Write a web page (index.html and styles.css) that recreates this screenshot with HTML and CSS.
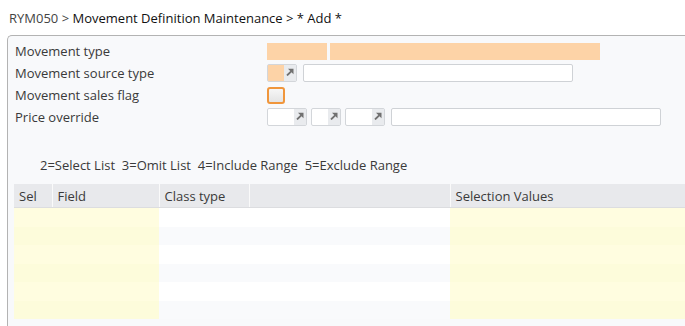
FILE: index.html
```html
<!DOCTYPE html>
<html>
<head>
<meta charset="utf-8">
<link rel="stylesheet" href="styles.css">
</head>
<body>
<div class="title"><span class="prog">RYM050 &gt; </span><span class="name">Movement Definition Maintenance &gt; * Add *</span></div>
<div class="panel">
  <div class="form">
    <div class="label">Movement type</div>
    <div class="fields">
      <span class="box req w60"></span>
      <span class="box req w270"></span>
    </div>
    <div class="label">Movement source type</div>
    <div class="fields">
      <span class="prompt w30"><span class="pin req"></span><span class="btn"><svg viewBox="0 0 8 8" width="8" height="8"><path d="M1 7.5 L5.2 3.3" stroke="#707070" stroke-width="1.8"/><path d="M2 0.8 H7.5 V6.3 Z" fill="#707070"/></svg></span></span>
      <span class="box txt w270"></span>
    </div>
    <div class="label">Movement sales flag</div>
    <div class="fields">
      <span class="check"></span>
    </div>
    <div class="label">Price override</div>
    <div class="fields">
      <span class="prompt w40"><span class="pin"></span><span class="btn"><svg viewBox="0 0 8 8" width="8" height="8"><path d="M1 7.5 L5.2 3.3" stroke="#707070" stroke-width="1.8"/><path d="M2 0.8 H7.5 V6.3 Z" fill="#707070"/></svg></span></span>
      <span class="prompt w30"><span class="pin"></span><span class="btn"><svg viewBox="0 0 8 8" width="8" height="8"><path d="M1 7.5 L5.2 3.3" stroke="#707070" stroke-width="1.8"/><path d="M2 0.8 H7.5 V6.3 Z" fill="#707070"/></svg></span></span>
      <span class="prompt w40"><span class="pin"></span><span class="btn"><svg viewBox="0 0 8 8" width="8" height="8"><path d="M1 7.5 L5.2 3.3" stroke="#707070" stroke-width="1.8"/><path d="M2 0.8 H7.5 V6.3 Z" fill="#707070"/></svg></span></span>
      <span class="box txt w270"></span>
    </div>
  </div>
  <div class="legend">2=Select List&nbsp; 3=Omit List&nbsp; 4=Include Range&nbsp; 5=Exclude Range</div>
  <table class="grid">
    <colgroup>
      <col class="c-sel"><col class="c-field"><col class="c-class"><col class="c-blank"><col class="c-values">
    </colgroup>
    <thead>
      <tr><th>Sel</th><th>Field</th><th>Class type</th><th></th><th>Selection Values</th></tr>
    </thead>
    <tbody>
      <tr class="r1"><td class="y"></td><td class="y"></td><td></td><td></td><td class="y"></td></tr>
      <tr class="r2"><td class="y"></td><td class="y"></td><td></td><td></td><td class="y"></td></tr>
      <tr class="r1"><td class="y"></td><td class="y"></td><td></td><td></td><td class="y"></td></tr>
      <tr class="r2"><td class="y"></td><td class="y"></td><td></td><td></td><td class="y"></td></tr>
      <tr class="r1"><td class="y"></td><td class="y"></td><td></td><td></td><td class="y"></td></tr>
      <tr class="r2"><td class="y"></td><td class="y"></td><td></td><td></td><td class="y"></td></tr>
    </tbody>
  </table>
</div>
</body>
</html>
```
FILE: styles.css
```css
html, body {
  margin: 0;
  padding: 0;
  background: #ffffff;
  font-family: "Open Sans", "Liberation Sans", sans-serif;
  color: #3a3a3a;
  overflow: hidden;
}
.title {
  height: 35px;
  line-height: 36px;
  padding-left: 9px;
  font-size: 13px;
  white-space: nowrap;
}
.title .prog { color: #444; }
.title .name { color: #111; }
.panel {
  margin-left: 7px;
  border: 1px solid #b3b3b3;
  border-right: none;
  border-bottom: none;
  border-top-left-radius: 5px;
  background: #f8f9fb;
  padding: 4px 0 10px 6px;
  height: 300px;
  box-sizing: border-box;
}
.form {
  display: grid;
  grid-template-columns: 253px 1fr;
  grid-auto-rows: 22px;
  font-size: 13px;
}
.label {
  padding-left: 1px;
  line-height: 23px;
  color: #3a3a3a;
}
.fields {
  display: flex;
  align-items: center;
  gap: 3px;
}
.box {
  display: block;
  height: 17px;
  box-sizing: border-box;
}
.req { background: #fdd3a7; }
.txt {
  background: #fff;
  border: 1px solid #cfd2d6;
  border-radius: 2px;
  height: 18px;
}
.fields .txt { margin-left: 2px; }
.w60 { width: 60px; }
.w270 { width: 270px; }
.w30 { width: 30px; }
.w40 { width: 40px; }
.prompt {
  display: flex;
  height: 18px;
  box-sizing: border-box;
  border: 1px solid #d3d6da;
  border-radius: 2px;
  background: #fff;
  margin-right: 1px;
}
.prompt .pin { flex: 1; }
.prompt .pin.req { background: #fdd3a7; }
.prompt .btn {
  width: 12px;
  background: #e9ebee;
  display: flex;
  align-items: center;
  justify-content: center;
}
.prompt .btn svg { margin-top: -3px; }
.check {
  display: block;
  width: 18px;
  height: 17px;
  box-sizing: border-box;
  border: 2px solid #f0963c;
  border-radius: 3px;
  background: linear-gradient(#f6f6f6, #e4e4e4);
}
.legend {
  font-size: 13px;
  padding-left: 26px;
  margin-top: 27px;
  line-height: 20px;
  color: #3a3a3a;
  white-space: nowrap;
}
.grid {
  margin-top: 9px;
  border-collapse: collapse;
  width: 680px;
  table-layout: fixed;
  font-size: 13px;
}
.c-sel { width: 38px; }
.c-field { width: 107px; }
.c-class { width: 90px; }
.c-blank { width: 201px; }
.c-values { width: 244px; }
.grid th {
  height: 23px;
  padding: 1px 0 0 5px;
  text-align: left;
  font-weight: normal;
  color: #3a3a3a;
  background: #e8e9ec;
  border-left: 1px solid #fafafa;
  border-bottom: 1px solid #dcdde0;
  box-sizing: border-box;
  white-space: nowrap;
}
.grid th:first-child { border-left: none; }
.grid td {
  padding: 0;
}
.grid tr.r1 td { background: #ffffff; height: 19px; }
.grid tr.r2 td { background: #f9fafc; height: 18px; }
.grid tr.r1 td.y { background: #fffde0; }
.grid tr.r2 td.y { background: #fdfcdb; }
```
